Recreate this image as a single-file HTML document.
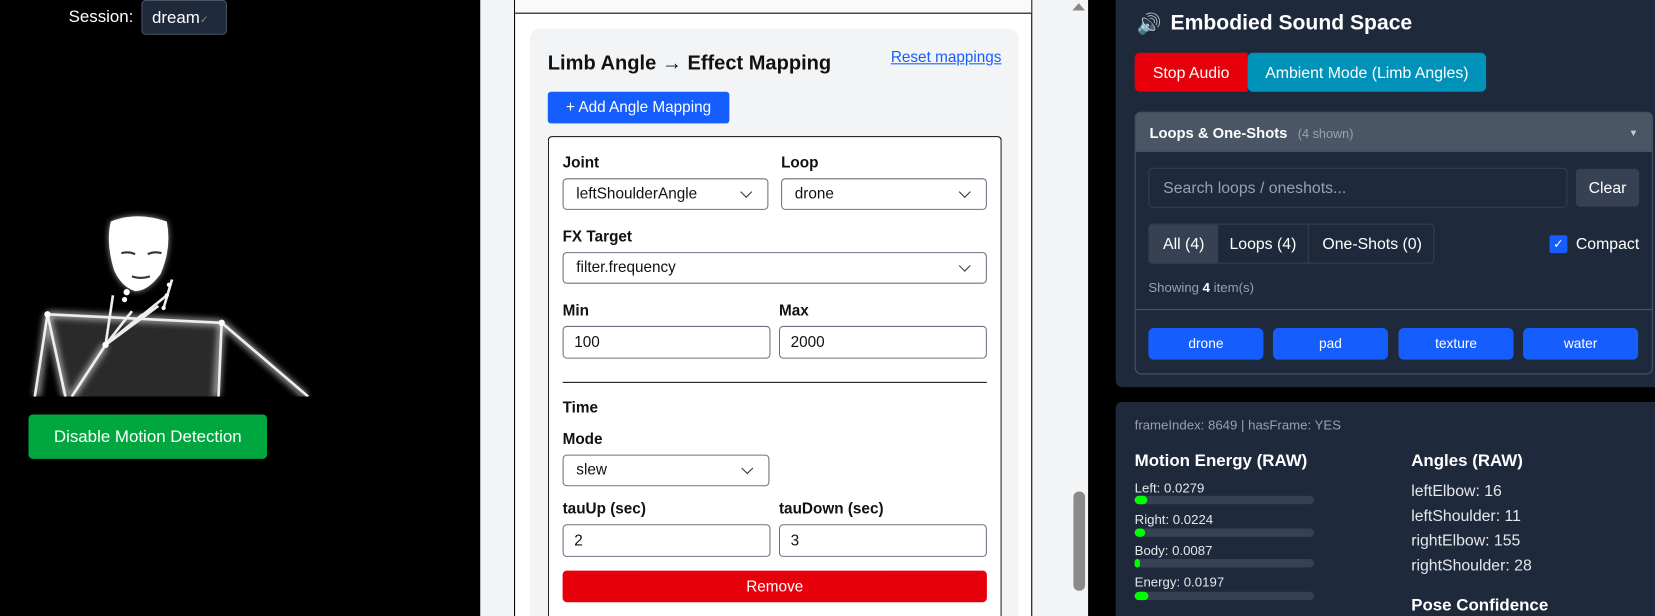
<!DOCTYPE html>
<html><head><meta charset="utf-8"><style>
*{box-sizing:border-box;margin:0;padding:0}
html,body{width:1655px;height:616px;overflow:hidden;background:#000;font-family:"Liberation Sans",sans-serif}
#w{position:absolute;left:0;top:0;width:1568px;height:584px;transform:scale(1.0555,1.0548);transform-origin:0 0;overflow:hidden}
.a{position:absolute}
.lbl{position:absolute;font-size:14.5px;color:#111;font-weight:600}
.sel{position:absolute;background:#fff;border:1px solid #6b7280;border-radius:4px;font-size:14.5px;color:#111;padding:0 12px;line-height:29px;height:30px}
.sel:after{content:"";position:absolute;right:16px;top:8px;width:7px;height:7px;border-right:1.5px solid #333;border-bottom:1.5px solid #333;transform:rotate(45deg)}
.inp{position:absolute;background:#fff;border:1px solid #6b7280;border-radius:4px;font-size:14.5px;color:#111;padding:0 10px;line-height:30px;height:31px}
.wt{color:#e5e7eb}
.bar{position:absolute;left:1075px;width:170px;height:8px;border-radius:4px;background:#364153}
.bar i{position:absolute;left:0;top:0;height:8px;border-radius:4px;background:#00ff00}
.sm{position:absolute;font-size:12.5px;color:#e5e7eb}
.ang{position:absolute;left:1337px;font-size:15px;color:#e5e7eb}
.pb{position:absolute;top:311px;height:30px;width:109px;background:#155dfc;border-radius:5px;color:#fff;font-size:13px;text-align:center;line-height:30px}
</style></head><body><div id="w">
<div class="a" style="left:0;top:0;width:455px;height:584px;background:#000"></div>
<div class="a wt" style="left:65px;top:8px;font-size:16px;color:#fff">Session:</div>
<div class="a" style="left:134px;top:0;width:81px;height:33px;background:#1e293b;border:1px solid #4b5563;border-radius:4px;color:#fff;font-size:16px;padding:8px 9px">dream<span style="font-size:10px;color:#888">✓</span></div>
<svg class="a" style="left:0;top:180px" width="455" height="196">
<defs><filter id="g"><feGaussianBlur stdDeviation="3"/></filter></defs>
<polygon points="45,118 210,126 205,196 60,196" fill="#2a2a2a"/>
<g stroke="#fff" stroke-width="6" filter="url(#g)" fill="none" opacity=".6">
<path d="M45,118 L35,196 M45,118 L62,196 M45,118 L210,126 M210,126 L205,196 M210,126 L290,196 M100,147 L68,196"/></g>
<g stroke="#eee" stroke-width="2.5" fill="none">
<path d="M45,118 L33,196 M45,118 L62,196 M45,118 L210,126 M210,126 L207,196 M210,126 L292,196 M100,147 L68,196"/>
<path d="M100,147 L107,100 M100,147 L125,115 M100,147 L135,118 M100,147 L150,110 M100,147 L158,100 M155,112 L163,85"/>
</g>
<g fill="#fff"><circle cx="45" cy="118" r="3"/><circle cx="210" cy="126" r="3"/><circle cx="100" cy="147" r="3"/><circle cx="120" cy="97" r="3"/><circle cx="118" cy="104" r="2.5"/><circle cx="158" cy="100" r="2"/><circle cx="160" cy="90" r="2"/><circle cx="155" cy="112" r="2"/></g>
<path d="M105,30 Q130,20 158,30 Q163,55 152,80 Q140,96 128,96 Q115,92 108,76 Q100,50 105,30Z" fill="#fff" filter="url(#g)" opacity=".6"/>
<path d="M105,30 Q130,20 158,30 Q163,55 152,80 Q140,96 128,96 Q115,92 108,76 Q100,50 105,30Z" fill="#fff"/>
<path d="M115,60 Q122,58 128,61 M140,61 Q146,58 153,60 M125,82 Q133,85 142,82" stroke="#333" stroke-width="2" fill="none"/>
</svg>
<div class="a" style="left:27px;top:393px;width:226px;height:42px;background:#00a63e;border-radius:4px;color:#fff;font-size:16px;text-align:center;line-height:44px">Disable Motion Detection</div>
<div class="a" style="left:455px;top:0;width:576px;height:584px;background:#f3f4f6"></div>
<div class="a" style="left:487px;top:0;width:491px;height:584px;background:#fff;border-left:1px solid #000;border-right:1px solid #000"></div>
<div class="a" style="left:488px;top:0;width:489px;height:13px;background:#f9fafb;border-bottom:1px solid #000"></div>
<div class="a" style="left:502px;top:27px;width:463px;height:557px;background:#f3f4f6;border-radius:10px 10px 0 0"></div>
<div class="a" style="left:519px;top:50px;font-size:19px;font-weight:700;color:#111">Limb Angle → Effect Mapping</div>
<div class="a" style="left:844px;top:47px;font-size:14.5px;color:#155dfc;text-decoration:underline">Reset mappings</div>
<div class="a" style="left:519px;top:87px;width:172px;height:30px;background:#155dfc;border-radius:3px;color:#fff;font-size:14.5px;text-align:center;line-height:31px">+ Add Angle Mapping</div>
<div class="a" style="left:519px;top:129px;width:430px;height:455px;background:#fff;border:1px solid #000;border-bottom:none;border-radius:4px 4px 0 0"></div>
<div class="lbl" style="left:533px;top:147px">Joint</div><div class="lbl" style="left:740px;top:147px">Loop</div>
<div class="sel" style="left:533px;top:169px;width:195px">leftShoulderAngle</div>
<div class="sel" style="left:740px;top:169px;width:195px">drone</div>
<div class="lbl" style="left:533px;top:217px">FX Target</div>
<div class="sel" style="left:533px;top:239px;width:402px">filter.frequency</div>
<div class="lbl" style="left:533px;top:287px">Min</div><div class="lbl" style="left:738px;top:287px">Max</div>
<div class="inp" style="left:533px;top:309px;width:197px">100</div>
<div class="inp" style="left:738px;top:309px;width:197px">2000</div>
<div class="a" style="left:533px;top:362px;width:402px;height:1px;background:#111"></div>
<div class="lbl" style="left:533px;top:379px">Time</div>
<div class="lbl" style="left:533px;top:409px">Mode</div>
<div class="sel" style="left:533px;top:431px;width:196px">slew</div>
<div class="lbl" style="left:533px;top:475px">tauUp (sec)</div><div class="lbl" style="left:738px;top:475px">tauDown (sec)</div>
<div class="inp" style="left:533px;top:497px;width:197px">2</div>
<div class="inp" style="left:738px;top:497px;width:197px">3</div>
<div class="a" style="left:533px;top:541px;width:402px;height:30px;background:#e7000b;border-radius:4px;color:#fff;font-size:14.5px;text-align:center;line-height:32px">Remove</div>
<div class="a" style="left:1016px;top:3px;width:0;height:0;border-left:6px solid transparent;border-right:6px solid transparent;border-bottom:7px solid #888"></div>
<div class="a" style="left:1017px;top:466px;width:11px;height:94px;background:#8a8a8a;border-radius:5px"></div>
<div class="a" style="left:1031px;top:0;width:26px;height:584px;background:#000"></div>
<div class="a" style="left:1057px;top:0;width:511px;height:367px;background:#1e293b;border-radius:0 0 0 6px"></div>
<div class="a" style="left:1077px;top:11px;font-size:19px;color:#ccc">🔊</div>
<div class="a" style="left:1109px;top:11px;font-size:20px;font-weight:700;color:#fff">Embodied Sound Space</div>
<div class="a" style="left:1075px;top:50px;width:107px;height:37px;background:#e7000b;border-radius:5px 0 0 5px;color:#fff;font-size:15px;text-align:center;line-height:39px">Stop Audio</div>
<div class="a" style="left:1182px;top:50px;width:226px;height:37px;background:#0092b8;border-radius:5px;color:#fff;font-size:15px;text-align:center;line-height:39px">Ambient Mode (Limb Angles)</div>
<div class="a" style="left:1075px;top:106px;width:491px;height:249px;border:1px solid #4a5565;border-radius:6px;overflow:hidden">
<div style="height:37px;background:#4a5565;padding:0 13px;line-height:39px;font-size:14px;font-weight:700;color:#fff">Loops &amp; One-Shots <span style="font-weight:400;color:#9ca3af;font-size:12px;margin-left:6px">(4 shown)</span><span style="float:right;font-size:9px;color:#ccc">▼</span></div>
</div>
<div class="a" style="left:1088px;top:159px;width:397px;height:38px;border:1px solid #364153;border-radius:4px;color:#99a1af;font-size:15px;padding-left:13px;line-height:38px">Search loops / oneshots...</div>
<div class="a" style="left:1493px;top:160px;width:60px;height:36px;background:#364153;border-radius:4px;color:#fff;font-size:15px;text-align:center;line-height:38px">Clear</div>
<div class="a" style="left:1088px;top:212px;width:271px;height:38px;border:1px solid #364153;border-radius:4px;font-size:15px;color:#fff;line-height:38px;overflow:hidden">
<span style="position:absolute;left:0;width:65px;height:36px;background:#364153;text-align:center">All (4)</span>
<span style="position:absolute;left:65px;width:86px;text-align:center;border-right:1px solid #364153">Loops (4)</span>
<span style="position:absolute;left:152px;width:118px;text-align:center">One-Shots (0)</span></div>
<div class="a" style="left:1468px;top:223px;width:17px;height:17px;background:#155dfc;border-radius:2px;color:#fff;font-size:12px;text-align:center;line-height:17px">✓</div>
<div class="a" style="left:1493px;top:223px;font-size:15px;color:#fff">Compact</div>
<div class="a" style="left:1088px;top:266px;font-size:12.5px;color:#99a1af">Showing <b style="color:#fff">4</b> item(s)</div>
<div class="a" style="left:1076px;top:293px;width:489px;height:1px;background:#4a5565"></div>
<div class="pb" style="left:1088px">drone</div><div class="pb" style="left:1206px">pad</div><div class="pb" style="left:1325px">texture</div><div class="pb" style="left:1443px">water</div>
<div class="a" style="left:1057px;top:381px;width:511px;height:203px;background:#1e293b;border-radius:6px 0 0 0"></div>
<div class="a" style="left:1075px;top:396px;font-size:12.5px;color:#99a1af">frameIndex: 8649 | hasFrame: YES</div>
<div class="a" style="left:1075px;top:429px;font-size:16px;font-weight:700;color:#fff">Motion Energy (RAW)</div>
<div class="a" style="left:1337px;top:429px;font-size:16px;font-weight:700;color:#fff">Angles (RAW)</div>
<div class="sm" style="left:1075px;top:456px">Left: 0.0279</div><div class="bar" style="top:470px"><i style="width:12px"></i></div>
<div class="sm" style="left:1075px;top:486px">Right: 0.0224</div><div class="bar" style="top:501px"><i style="width:10px"></i></div>
<div class="sm" style="left:1075px;top:515px">Body: 0.0087</div><div class="bar" style="top:530px"><i style="width:5px"></i></div>
<div class="sm" style="left:1075px;top:545px">Energy: 0.0197</div><div class="bar" style="top:561px"><i style="width:13px"></i></div>
<div class="ang" style="top:457px">leftElbow: 16</div>
<div class="ang" style="top:481px">leftShoulder: 11</div>
<div class="ang" style="top:504px">rightElbow: 155</div>
<div class="ang" style="top:528px">rightShoulder: 28</div>
<div class="a" style="left:1337px;top:566px;font-size:16px;line-height:18px;font-weight:700;color:#fff">Pose Confidence</div>
</div></body></html>
